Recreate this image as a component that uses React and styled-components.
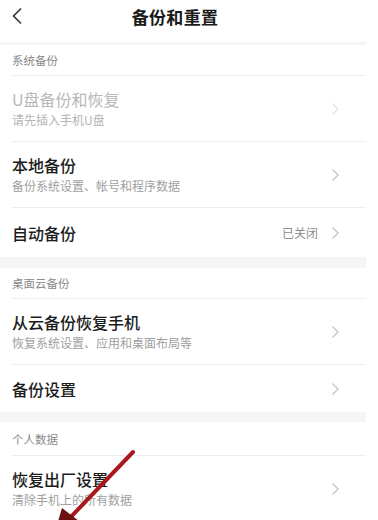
import React from "react";
import styled, { createGlobalStyle } from "styled-components";

const GlobalStyle = createGlobalStyle`
    html, body {
        margin: 0;
        padding: 0;
        background: #ffffff;
        overflow: hidden;
    }
    body {
        font-family: "Noto Sans CJK SC", "Noto Sans", sans-serif;
    }
`;

const sections = [
    {
        label: "系统备份",
        rows: [
            { title: "U盘备份和恢复", sub: "请先插入手机U盘", disabled: true },
            { title: "本地备份", sub: "备份系统设置、帐号和程序数据" },
            { title: "自动备份", value: "已关闭" },
        ],
    },
    {
        label: "桌面云备份",
        rows: [
            { title: "从云备份恢复手机", sub: "恢复系统设置、应用和桌面布局等" },
            { title: "备份设置" },
        ],
    },
    {
        label: "个人数据",
        rows: [{ title: "恢复出厂设置", sub: "清除手机上的所有数据" }],
    },
];

function Chevron({ faded }) {
    return (
        <svg width="9" height="14" viewBox="0 0 9 14">
            <path
                d="M1.5 1.5 L7 7 L1.5 12.5"
                fill="none"
                stroke={faded ? "#e2e2e2" : "#c4c4c4"}
                strokeWidth="1.3"
            />
        </svg>
    );
}

function Settings() {
    return (
        <Page>
            <Header>
                <BackButton>
                    <svg width="12" height="18" viewBox="0 0 12 18">
                        <path d="M10 1.5 L2.5 9 L10 16.5" fill="none" stroke="#333" strokeWidth="1.6" />
                    </svg>
                </BackButton>
                <Title>备份和重置</Title>
            </Header>
            <Band $h={3} />
            {sections.map((section, i) => (
                <React.Fragment key={section.label}>
                    {i > 0 && <Band $h={i === 1 ? 11 : 10} />}
                    <SectionLabel $h={i === 2 ? 33 : 30}>{section.label}</SectionLabel>
                    {section.rows.map((row, j) => (
                        <Row
                            key={row.title}
                            $h={row.sub ? 65 : i === 0 ? 49 : 47}
                            $last={j === section.rows.length - 1}
                        >
                            <RowText>
                                <RowTitle $disabled={row.disabled}>{row.title}</RowTitle>
                                {row.sub && <RowSub $disabled={row.disabled}>{row.sub}</RowSub>}
                            </RowText>
                            {row.value && <RowValue>{row.value}</RowValue>}
                            <Chevron faded={row.disabled} />
                        </Row>
                    ))}
                </React.Fragment>
            ))}
            <Arrow width="378" height="520" viewBox="0 0 378 520">
                <line x1="133" y1="452" x2="66" y2="522" stroke="#a8191c" strokeWidth="4" strokeLinecap="round" />
                <polygon points="62,508 88,528 50,548" fill="#6e1012" />
            </Arrow>
        </Page>
    );
}

const Page = styled.div`
    position: relative;
    width: 366px;
    height: 520px;
    background: #ffffff;
`;

const Header = styled.div`
    height: 42px;
    display: flex;
    align-items: center;
    justify-content: center;
    position: relative;
`;

const BackButton = styled.div`
    position: absolute;
    left: 11px;
    top: 7px;
    display: flex;
`;

const Title = styled.div`
    font-size: 17px;
    font-weight: 700;
    color: #1a1a1a;
    margin-top: -10px;
    margin-left: -16px;
    letter-spacing: 0.3px;
`;

const Band = styled.div`
    height: ${(p) => p.$h}px;
    background: #f5f5f5;
`;

const SectionLabel = styled.div`
    height: ${(p) => p.$h}px;
    margin-left: 12px;
    display: flex;
    align-items: center;
    font-size: 11.5px;
    color: #8a8a8a;
    border-bottom: 1px solid #eeeeee;
`;

const Row = styled.div`
    height: ${(p) => p.$h}px;
    margin-left: 12px;
    padding-right: 26px;
    display: flex;
    align-items: center;
    gap: 13px;
    border-bottom: ${(p) => (p.$last ? "none" : "1px solid #eeeeee")};
`;

const RowText = styled.div`
    flex: 1;
    display: flex;
    flex-direction: column;
    gap: 2px;
`;

const RowTitle = styled.div`
    font-size: 16px;
    font-weight: ${(p) => (p.$disabled ? 400 : 500)};
    line-height: 20px;
    color: ${(p) => (p.$disabled ? "#b8b8b8" : "#1c1c1c")};
`;

const RowSub = styled.div`
    font-size: 12px;
    line-height: 17px;
    color: ${(p) => (p.$disabled ? "#b4b4b4" : "#a0a0a0")};
`;

const RowValue = styled.div`
    font-size: 12px;
    color: #8c8c8c;
`;

const Arrow = styled.svg`
    position: absolute;
    left: 0;
    top: 0;
    pointer-events: none;
`;

export default function App() {
    return (
        <>
            <GlobalStyle />
            <Settings />
        </>
    );
}
